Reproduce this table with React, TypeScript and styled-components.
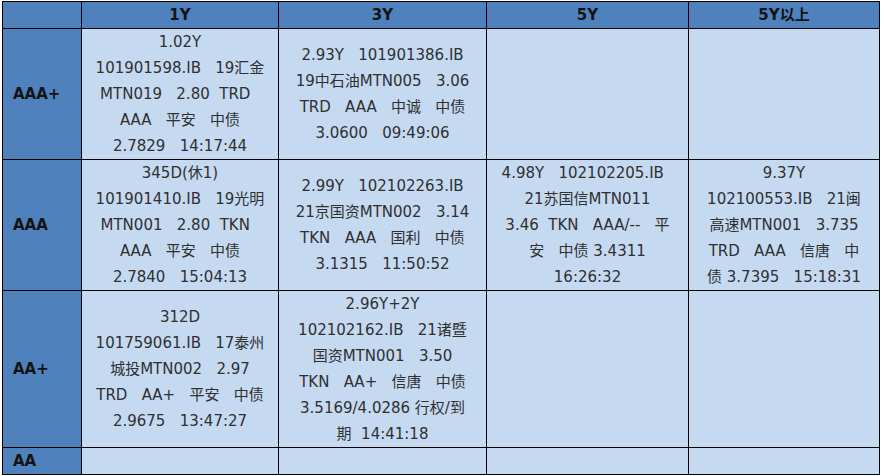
import styled, { createGlobalStyle } from "styled-components";

const GlobalStyle = createGlobalStyle`
  html, body {
    margin: 0;
    padding: 0;
    background: #ffffff;
  }
  body {
    font-family: "DejaVu Sans", "Noto Sans CJK SC", sans-serif;
  }
`;

const columns = ["1Y", "3Y", "5Y", "5Y以上"];
const colWidths = [79, 197, 208, 202, 191];

interface QuoteRow {
  rating: string;
  cells: string[][];
}

// each quote is laid out line by line, as on the board
const rows: QuoteRow[] = [
  {
    rating: "AAA+",
    cells: [
      [
        "1.02Y",
        "101901598.IB   19汇金",
        "MTN019   2.80  TRD  ",
        "AAA   平安   中债",
        "2.7829   14:17:44",
      ],
      [
        "2.93Y   101901386.IB",
        "19中石油MTN005   3.06",
        "TRD   AAA   中诚   中债",
        "3.0600   09:49:06",
      ],
      [],
      [],
    ],
  },
  {
    rating: "AAA",
    cells: [
      [
        "345D(休1)",
        "101901410.IB   19光明",
        "MTN001   2.80  TKN  ",
        "AAA   平安   中债",
        "2.7840   15:04:13",
      ],
      [
        "2.99Y   102102263.IB",
        "21京国资MTN002   3.14",
        "TKN   AAA   国利   中债",
        "3.1315   11:50:52",
      ],
      [
        "4.98Y   102102205.IB  ",
        "21苏国信MTN011",
        "3.46  TKN   AAA/--   平",
        "安   中债 3.4311",
        "16:26:32",
      ],
      [
        "9.37Y",
        "102100553.IB   21闽",
        "高速MTN001   3.735",
        "TRD   AAA   信唐   中",
        "债 3.7395   15:18:31",
      ],
    ],
  },
  {
    rating: "AA+",
    cells: [
      [
        "312D",
        "101759061.IB   17泰州",
        "城投MTN002   2.97",
        "TRD   AA+   平安   中债",
        "2.9675   13:47:27",
      ],
      [
        "2.96Y+2Y",
        "102102162.IB   21诸暨",
        "国资MTN001   3.50",
        "TKN   AA+   信唐   中债",
        "3.5169/4.0286 行权/到",
        "期  14:41:18",
      ],
      [],
      [],
    ],
  },
  {
    rating: "AA",
    cells: [[], [], [], []],
  },
];

const Frame = styled.div`
  padding: 1px 0 0 2px;
`;

const Board = styled.table`
  width: 878px;
  table-layout: fixed;
  border-collapse: collapse;
  border: 1px solid #000;
  font-size: 15px;
  line-height: 26px;
  color: #303030;
`;

const HeadCell = styled.th`
  background: #4f81bd;
  border: 1px solid #000;
  padding: 0;
  font-weight: bold;
  color: #141414;
  text-align: center;
  vertical-align: middle;
`;

const RatingCell = styled.th`
  background: #4f81bd;
  border: 1px solid #000;
  padding: 0 0 0 10px;
  font-weight: bold;
  color: #141414;
  text-align: left;
  vertical-align: middle;
`;

const QuoteCell = styled.td`
  background: #c5d9f1;
  border: 1px solid #000;
  padding: 0 2px;
  text-align: center;
  vertical-align: middle;
`;

const Line = styled.div`
  white-space: pre;
`;

export default function App() {
  return (
    <>
      <GlobalStyle />
      <Frame>
        <Board>
          <colgroup>
            {colWidths.map((w, i) => (
              <col key={i} style={{ width: w }} />
            ))}
          </colgroup>
          <thead>
            <tr>
              <HeadCell />
              {columns.map((c) => (
                <HeadCell key={c}>{c}</HeadCell>
              ))}
            </tr>
          </thead>
          <tbody>
            {rows.map((row) => (
              <tr key={row.rating}>
                <RatingCell>{row.rating}</RatingCell>
                {row.cells.map((lines, i) => (
                  <QuoteCell key={i}>
                    {lines.map((l, j) => (
                      <Line key={j}>{l}</Line>
                    ))}
                  </QuoteCell>
                ))}
              </tr>
            ))}
          </tbody>
        </Board>
      </Frame>
    </>
  );
}
